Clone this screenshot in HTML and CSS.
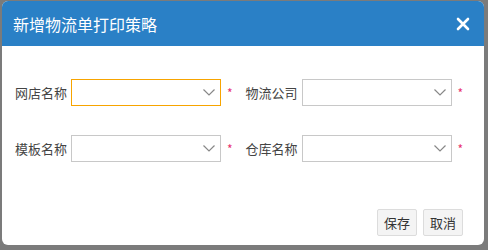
FILE: index.html
```html
<!DOCTYPE html>
<html>
<head>
<meta charset="utf-8">
<title>新增物流单打印策略</title>
<link rel="stylesheet" href="styles.css">
</head>
<body>
<div class="dialog">
  <div class="dialog-head">
    <span class="dialog-title">新增物流单打印策略</span>
    <span class="dialog-close">
      <svg width="14" height="14" viewBox="0 0 14 14"><path d="M2 2L12 12M12 2L2 12" stroke="#fff" stroke-width="2.6" stroke-linecap="round"/></svg>
    </span>
  </div>
  <div class="dialog-body">
    <div class="form-row">
      <div class="field">
        <label>网店名称</label>
        <div class="select focus"><svg class="arrow" width="12" height="7" viewBox="0 0 12 7"><path d="M0.5 0.5L6 6L11.5 0.5" fill="none" stroke="#888" stroke-width="1.2"/></svg></div>
        <span class="req">*</span>
      </div>
      <div class="field">
        <label>物流公司</label>
        <div class="select"><svg class="arrow" width="12" height="7" viewBox="0 0 12 7"><path d="M0.5 0.5L6 6L11.5 0.5" fill="none" stroke="#888" stroke-width="1.2"/></svg></div>
        <span class="req">*</span>
      </div>
    </div>
    <div class="form-row">
      <div class="field">
        <label>模板名称</label>
        <div class="select"><svg class="arrow" width="12" height="7" viewBox="0 0 12 7"><path d="M0.5 0.5L6 6L11.5 0.5" fill="none" stroke="#888" stroke-width="1.2"/></svg></div>
        <span class="req">*</span>
      </div>
      <div class="field">
        <label>仓库名称</label>
        <div class="select"><svg class="arrow" width="12" height="7" viewBox="0 0 12 7"><path d="M0.5 0.5L6 6L11.5 0.5" fill="none" stroke="#888" stroke-width="1.2"/></svg></div>
        <span class="req">*</span>
      </div>
    </div>
  </div>
  <div class="dialog-foot">
    <button class="btn">保存</button>
    <button class="btn">取消</button>
  </div>
</div>
</body>
</html>
```
FILE: styles.css
```css
html, body {
  margin: 0;
  height: 100%;
}

body {
  background: #7b7b7b;
  font-family: "Microsoft YaHei", "Noto Sans CJK SC", sans-serif;
  font-size: 13px;
  color: #333;
  padding: 1px 4px 5px 2px;
  box-sizing: border-box;
}

.dialog {
  background: #fff;
  border-radius: 6px;
  height: 244px;
  display: flex;
  flex-direction: column;
  overflow: hidden;
}

.dialog-head {
  background: #2a80c6;
  height: 45px;
  display: flex;
  align-items: center;
  justify-content: space-between;
  padding: 0 14px 0 11px;
}

.dialog-title {
  color: #fff;
  font-size: 16px;
}

.dialog-close {
  display: flex;
}

.dialog-body {
  padding: 33px 0 0 13px;
  display: flex;
  flex-direction: column;
  gap: 29px;
}

.form-row {
  display: flex;
  gap: 13px;
}

.field {
  display: flex;
  align-items: center;
}

.field label {
  width: 56px;
  color: #444;
}

.select {
  width: 148px;
  height: 25px;
  border: 1px solid #c8c8c8;
  position: relative;
}

.select.focus {
  border: 1px solid #f7a400;
}

.arrow {
  position: absolute;
  right: 5px;
  top: 9px;
}

.req {
  color: #e8316f;
  margin-left: 6px;
  font-size: 12px;
}

.dialog-foot {
  margin-top: auto;
  display: flex;
  justify-content: flex-end;
  gap: 6px;
  padding: 0 21px 9px 0;
}

.btn {
  width: 40px;
  height: 27px;
  padding: 0;
  background: #f4f4f4;
  border: 1px solid #dcdcdc;
  border-radius: 2px;
  font-family: inherit;
  font-size: 13px;
  color: #333;
}
```
